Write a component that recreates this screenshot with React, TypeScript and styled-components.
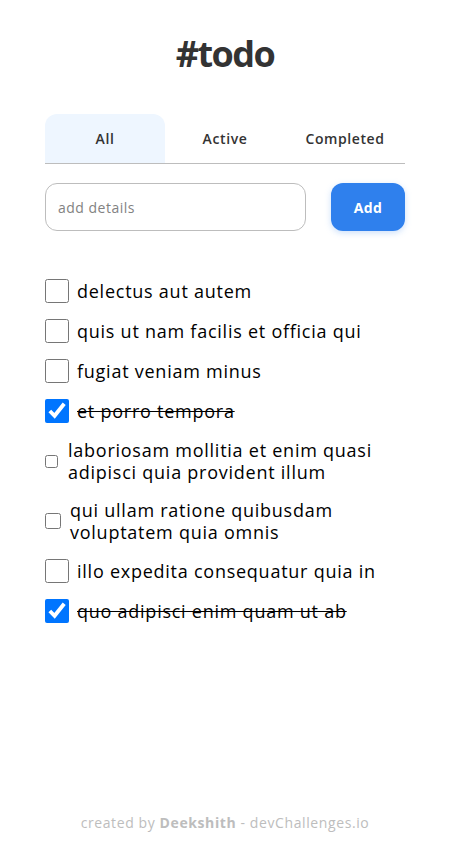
import React from "react";
import styled, { createGlobalStyle } from "styled-components";

const Global = createGlobalStyle`
  * { box-sizing: border-box; }
  body { margin: 0; font-family: "Open Sans", "Noto Sans", sans-serif; background: #fff; }
`;

const Page = styled.div`
  width: 450px;
  min-height: 864px;
  display: flex;
  flex-direction: column;
  padding: 0 45px;
`;

const Title = styled.h1`
  margin: 32px 0 0;
  height: 44px;
  text-align: center;
  font-size: 36px;
  line-height: 44px;
  font-weight: 700;
  letter-spacing: -1.5px;
  color: #333;
`;

const Tabs = styled.div`
  margin-top: 38px;
  display: grid;
  grid-template-columns: repeat(3, 1fr);
  border-bottom: 1px solid #bdbdbd;
`;

const Tab = styled.div<{ $active?: boolean }>`
  height: 49px;
  display: flex;
  align-items: center;
  justify-content: center;
  font-size: 14px;
  font-weight: 600;
  letter-spacing: 0.6px;
  color: #333;
  border-radius: 12px 12px 0 0;
  background: ${(p) => (p.$active ? "#eef6ff" : "transparent")};
`;

const Form = styled.div`
  margin-top: 19px;
  display: flex;
  gap: 25px;
`;

const Input = styled.input`
  flex: 1;
  height: 48px;
  border: 1px solid #bdbdbd;
  border-radius: 12px;
  padding: 0 12px;
  font-family: inherit;
  font-size: 14px;
  letter-spacing: 0.5px;
  outline: none;
  &::placeholder { color: #828282; }
`;

const AddButton = styled.button`
  width: 74px;
  height: 48px;
  border: none;
  border-radius: 12px;
  background: #2f80ed;
  color: #fff;
  font-family: inherit;
  font-size: 14px;
  font-weight: 700;
  letter-spacing: 0.4px;
  box-shadow: 0 2px 6px rgba(127, 177, 243, 0.4);
`;

const List = styled.ul`
  list-style: none;
  margin: 48px 0 0;
  padding: 0;
  display: flex;
  flex-direction: column;
  gap: 16px;
`;

const Item = styled.li`
  display: flex;
  align-items: center;
`;

const Check = styled.input<{ $size: number; $gap: number }>`
  flex: none;
  width: ${(p) => p.$size}px;
  height: ${(p) => p.$size}px;
  margin: 0 ${(p) => p.$gap}px 0 0;
`;

const Label = styled.span<{ $done?: boolean }>`
  font-size: 18px;
  line-height: 22px;
  font-weight: 500;
  letter-spacing: 0.75px;
  color: #000;
  text-decoration: ${(p) => (p.$done ? "line-through" : "none")};
`;

const Footer = styled.footer`
  margin-top: auto;
  padding-bottom: 32px;
  text-align: center;
  font-size: 14px;
  font-weight: 500;
  letter-spacing: 0.6px;
  color: #bdbdbd;
  b { font-weight: 700; }
`;

const todos = [
  { text: "delectus aut autem", done: false, size: 24, gap: 8 },
  { text: "quis ut nam facilis et officia qui", done: false, size: 24, gap: 8 },
  { text: "fugiat veniam minus", done: false, size: 24, gap: 8 },
  { text: "et porro tempora", done: true, size: 24, gap: 8 },
  { text: "laboriosam mollitia et enim quasi adipisci quia provident illum", done: false, size: 13, gap: 10 },
  { text: "qui ullam ratione quibusdam voluptatem quia omnis", done: false, size: 16, gap: 9 },
  { text: "illo expedita consequatur quia in", done: false, size: 24, gap: 8 },
  { text: "quo adipisci enim quam ut ab", done: true, size: 24, gap: 8 },
];

export default function App() {
  return (
    <>
      <Global />
      <Page>
        <Title>#todo</Title>
        <Tabs>
          <Tab $active>All</Tab>
          <Tab>Active</Tab>
          <Tab>Completed</Tab>
        </Tabs>
        <Form>
          <Input placeholder="add details" />
          <AddButton>Add</AddButton>
        </Form>
        <List>
          {todos.map((t) => (
            <Item key={t.text}>
              <Check type="checkbox" defaultChecked={t.done} $size={t.size} $gap={t.gap} />
              <Label $done={t.done}>{t.text}</Label>
            </Item>
          ))}
        </List>
        <Footer>
          created by <b>Deekshith</b> - devChallenges.io
        </Footer>
      </Page>
    </>
  );
}
